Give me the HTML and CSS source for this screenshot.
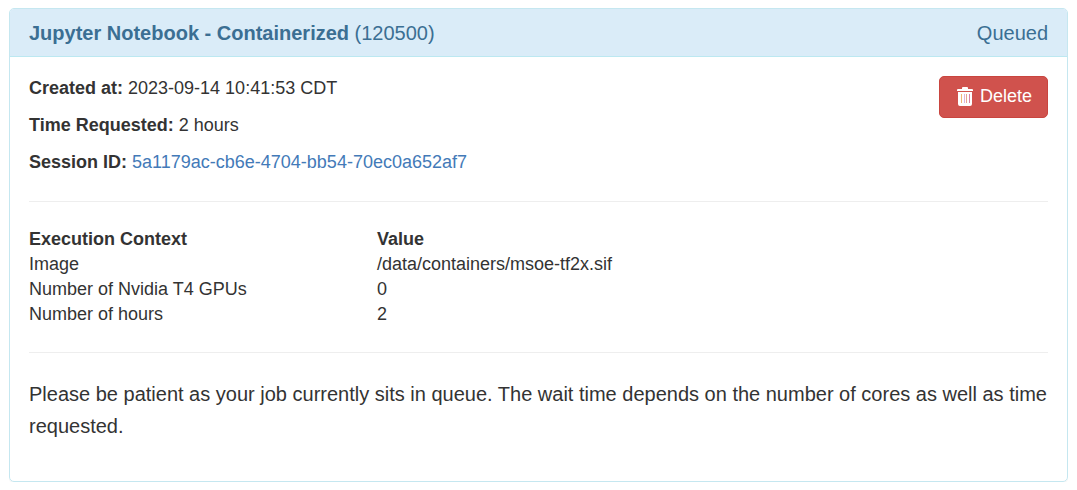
FILE: index.html
```html
<!DOCTYPE html>
<html lang="en">
<head>
<meta charset="utf-8">
<title>Interactive Sessions</title>
<link rel="stylesheet" href="styles.css">
</head>
<body>
<main class="card">
  <header class="card-header">
    <h1 class="card-title"><strong>Jupyter Notebook - Containerized</strong> (120500)</h1>
    <span class="status">Queued</span>
  </header>
  <div class="card-body">
    <section class="summary">
      <div class="details">
        <p><strong>Created at:</strong> 2023-09-14 10:41:53 CDT</p>
        <p><strong>Time Requested:</strong> 2 hours</p>
        <p><strong>Session ID:</strong> <a class="session-link" href="#session">5a1179ac-cb6e-4704-bb54-70ec0a652af7</a></p>
      </div>
      <button class="delete" type="button">
        <svg class="trash" viewBox="0 0 16 19" aria-hidden="true">
          <path fill="currentColor" d="M5 2V1q0-1 1-1h4q1 0 1 1v1h4q1 0 1 1v1H0V3q0-1 1-1zM1 5h14v12q0 2-2 2H3q-2 0-2-2z"/>
          <path fill="none" stroke="#f0b878" d="M4.500 7v9"/>
          <path fill="none" stroke="#d9b5e0" d="M7.500 7v9"/>
          <path fill="none" stroke="#e8a890" d="M9.500 7v9"/>
          <path fill="none" stroke="#d880a8" d="M12.500 7v9"/>
        </svg>
        Delete
      </button>
    </section>
    <hr class="rule">
    <table class="context">
      <thead><tr><th>Execution Context</th><th>Value</th></tr></thead>
      <tbody>
        <tr><td>Image</td><td>/data/containers/msoe-tf2x.sif</td></tr>
        <tr><td>Number of Nvidia T4 GPUs</td><td>0</td></tr>
        <tr><td>Number of hours</td><td>2</td></tr>
      </tbody>
    </table>
    <hr class="rule">
    <p class="message">Please be patient as your job currently sits in queue. The wait time depends on the number of cores as well as time requested.</p>
  </div>
</main>
</body>
</html>
```
FILE: styles.css
```css
* { box-sizing: border-box; }
body {
  margin: 8px 9px;
  background: #fff;
  color: #333;
  font: 18px/25px "Liberation Sans", Arial, sans-serif;
}
.card {
  border: 1px solid #c5e7f0;
  border-radius: 5px;
  box-shadow: 0 1px 1px rgba(0, 0, 0, 0.05);
}
.card-header {
  display: flex;
  justify-content: space-between;
  padding: 12px 19px 11px;
  border-bottom: 1px solid #bce8f1;
  border-radius: 4px 4px 0 0;
  background: #daecf8;
  color: #3b6f93;
  font-size: 20px;
  line-height: 24px;
}
.card-title { margin: 0; font-size: 20px; font-weight: 400; }
.card-body { padding: 19px 19px 39px; }
.summary { display: flex; justify-content: space-between; align-items: flex-start; }
.details { display: grid; gap: 12px; padding-bottom: 1px; }
.details p { margin: 0; }
.session-link { color: #437ab8; text-decoration: none; }
.delete {
  display: flex;
  align-items: center;
  gap: 7px;
  padding: 7px 15px 8px 17px;
  border: 1px solid #c9453f;
  border-radius: 5px;
  background: #d0524d;
  color: #fff;
  font: inherit;
}
.trash { width: 16px; height: 19px; }
.rule { margin: 25px 0; border: 0; border-top: 1px solid #eee; }
.context { width: 100%; table-layout: fixed; border-collapse: collapse; }
.context th, .context td { padding: 0; text-align: left; }
.context th:first-child { width: 348px; }
.message { margin: 0; font-size: 20px; line-height: 32px; }
```
